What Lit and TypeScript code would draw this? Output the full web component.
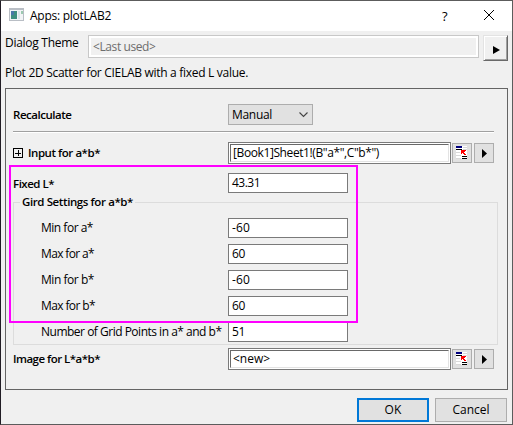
import { LitElement, html, css } from "lit";
import { customElement, property } from "lit/decorators.js";

/** Text run whose tracking is set so that it takes up the given width. */
@customElement("fit-text")
class FitText extends LitElement {
  @property() text = "";
  @property({ type: Number }) width = 0;
  static styles = css`
    :host { display: block; line-height: 16px; height: 16px; white-space: pre; flex: none; }
  `;
  render() {
    return html`<span>${this.text}</span>`;
  }
  updated() {
    const s = this.renderRoot.querySelector("span")!;
    s.style.letterSpacing = "0";
    const w = s.getBoundingClientRect().width;
    s.style.letterSpacing = (this.width - w) / this.text.length + "px";
  }
}

const t = (text: string, width: number, cls = "") =>
  html`<fit-text class=${cls} .text=${text} .width=${width}></fit-text>`;

const pickIcon = html`<svg width="12" height="14" viewBox="0 0 12 14" shape-rendering="crispEdges">
  <path fill="#fff" d="M0 0h11v13H0z" />
  <path fill="#000080" d="M0 0h6v2H0z" />
  <path fill="#000" d="M0 3h6v1H0zM6 10h5v1H6zM6 12h5v1H6z" />
  <path fill="#d8d8d8" d="M0 6h4v1H0zM0 9h5v1H0zM0 12h5v1H0zM7 1h4v1H7zM7 3h4v1H7z" />
  <path fill="#f00" d="M5 4h5v1H9v1H8v1h1v1h1v1H8V8H7V7H6v1H5z" />
</svg>`;

const playIcon = html`<svg width="5" height="9" viewBox="0 0 5 9"><path d="M0 0L5 4.5L0 9Z" /></svg>`;

@customElement("app-root")
class AppRoot extends LitElement {
  static styles = css`
    :host {
      display: block; position: relative; box-sizing: border-box;
      width: 513px; height: 425px; overflow: hidden;
      background: #f0f0f0; color: #000;
      border: 1px solid #5c5c5c; border-left-color: #201c24;
      font: 12px "Open Sans", "Noto Sans", sans-serif;
    }
    * { box-sizing: border-box; }
    svg { display: block; flex: none; }
    .title { display: flex; height: 30px; background: #fff; padding: 7px 0 0 8px; }
    .title .name { margin: 0 0 0 6px; }
    .title .help { margin-left: auto; width: 42px; font-size: 13px; }
    .title .close { margin: 2px 18px 0 0; }
    .theme { display: flex; height: 30px; padding: 4px 4px 0; }
    .theme .lbl { width: 83px; }
    .last { width: 391px; height: 23px; border: 1px solid #c8c8c8; box-shadow: inset 0 0 0 2px #fff; padding: 3px 0 0 4px; color: #6d6d6d; }
    .raised { margin-left: 4px; width: 25px; height: 26px; border: 1px solid; border-color: #e3e3e3 #696969 #696969 #e3e3e3;
      box-shadow: inset 1px 1px #fff, inset -1px -1px #a0a0a0; padding: 10px 0 0 9px; }
    .desc { height: 27px; padding: 4px 0 0 4px; }
    .frame { margin-left: 4px; width: 503px; height: 302px; border: 1px solid #646464; padding: 15px 0 0 7px; }
    .row { display: flex; align-items: flex-start; }
    .row > .lbl { width: 215px; padding-top: 3px; }
    .b { font-weight: 600; font-size: 11.5px; }
    .select { width: 85px; height: 21px; border: 1px solid #adadad; background: #e1e1e1; display: flex; justify-content: space-between; padding: 2px 4px 0 3px; }
    .select svg { margin-top: 5px; }
    .rule { width: 481px; height: 2px; margin: 6px 0 9px; background: #a0a0a0; border-bottom: 1px solid #fff; }
    .branch { display: flex; gap: 5px; }
    .combo { width: 223px; height: 22px; border: 1px solid #7a7a7a; background: #fff; padding: 1px; }
    .well { height: 18px; border: 1px solid; border-color: #696969 #e3e3e3 #e3e3e3 #696969; padding-left: 2px; }
    .btn { width: 20px; height: 20px; border: 1px solid #adadad; background: #e1e1e1; margin: 1px 0 0 1px; display: flex; align-items: center; justify-content: center; }
    .btn + .btn { margin-left: 2px; }
    .input { width: 120px; height: 20px; border: 1px solid #7a7a7a; background: #fff; padding: 1px 0 0 3px; }
    .fixed { margin-top: 9px; }
    .group { position: relative; width: 485px; height: 143px; margin-top: 9px; border: 1px solid #dcdcdc; padding: 15px 0 0 27px; display: flex; flex-direction: column; gap: 6px; }
    .group .lbl { width: 187px; padding-top: 2px; }
    .legend { position: absolute; left: 6px; top: -9px; width: 115px; padding-left: 2px; background: #f0f0f0; }
    .image { margin-top: 3px; }
    .actions { display: flex; justify-content: flex-end; gap: 6px; padding: 8px 5px 0 0; }
    .action { width: 72px; height: 24px; border: 1px solid #adadad; background: #e1e1e1; display: flex; justify-content: center; padding-top: 3px; }
    .action.ok { border: 2px solid #0078d7; padding-top: 2px; }
    .mark { position: absolute; left: 8px; top: 164px; width: 349px; height: 158px; border: 2px solid #f0f; }
  `;

  param(label: string, lw: number, value: string, vw: number) {
    return html`<div class="row"><div class="lbl">${t(label, lw)}</div><div class="input">${t(value, vw)}</div></div>`;
  }

  combo(value: string, w: number) {
    return html`<div class="combo"><div class="well">${t(value, w)}</div></div>
      <div class="btn">${pickIcon}</div><div class="btn">${playIcon}</div>`;
  }

  render() {
    return html`
      <div class="title">
        <svg width="15" height="13" viewBox="0 0 15 13" shape-rendering="crispEdges">
          <path fill="#b9bec5" d="M0 0h15v13H0z" /><path fill="#f2f4f6" d="M1 2h13v10H1z" />
          <path fill="#3f8f80" d="M2 3h6v8H2z" /><path fill="#4b78a8" d="M2 3h3v4H2z" />
          <path fill="#dce4e8" d="M9 3h2v8H9z" /><path fill="#9cc9b0" d="M12 3h2v3h-2z" />
        </svg>
        ${t("Apps: plotLAB2", 81, "name")}
        ${t("?", 6, "help")}
        <svg class="close" width="10" height="10" viewBox="0 0 10 10"><path d="M0 0L10 10M10 0L0 10" stroke="#000" /></svg>
      </div>
      <div class="theme">
        <div class="lbl">${t("Dialog Theme", 73.5)}</div>
        <div class="last">${t("<Last used>", 62.5)}</div>
        <div class="raised"><svg width="7" height="8" viewBox="0 0 7 8"><path d="M0 0L7 4L0 8Z" /></svg></div>
      </div>
      <div class="desc">${t("Plot 2D Scatter for CIELAB with a fixed L value.", 243)}</div>
      <div class="frame">
        <div class="row">
          <div class="lbl b">${t("Recalculate", 58.5)}</div>
          <div class="select">${t("Manual", 40)}
            <svg width="9" height="6" viewBox="0 0 9 6"><path d="M.5 .5L4.5 4.5L8.5 .5" fill="none" stroke="#444" stroke-width="1.1" /></svg>
          </div>
        </div>
        <div class="rule"></div>
        <div class="row">
          <div class="lbl b branch">
            <svg width="10" height="16" viewBox="0 0 10 16" shape-rendering="crispEdges"><path fill="none" stroke="#000" d="M.5 3.5h9v9h-9zM2 8.5h6M5.5 5v6" /></svg>
            ${t("Input for a*b*", 72)}
          </div>
          ${this.combo('[Book1]Sheet1!(B"a*",C"b*")', 146)}
        </div>
        <div class="row fixed"><div class="lbl b">${t("Fixed L*", 41)}</div><div class="input">${t("43.31", 28)}</div></div>
        <div class="group">
          <div class="legend b">${t("Gird Settings for a*b*", 111)}</div>
          ${this.param("Min for a*", 52, "-60", 18)}
          ${this.param("Max for a*", 53, "60", 13)}
          ${this.param("Min for b*", 53, "-60", 18)}
          ${this.param("Max for b*", 54, "60", 13)}
          ${this.param("Number of Grid Points in a* and b*", 180.5, "51", 13)}
        </div>
        <div class="row image"><div class="lbl b">${t("Image for L*a*b*", 87)}</div>${this.combo("<new>", 37)}</div>
      </div>
      <div class="actions">
        <div class="action ok">${t("OK", 17)}</div>
        <div class="action">${t("Cancel", 37)}</div>
      </div>
      <div class="mark"></div>
    `;
  }
}
